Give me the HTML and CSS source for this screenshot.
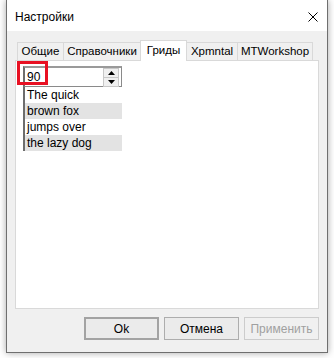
FILE: index.html
```html
<!DOCTYPE html>
<html lang="ru">
<head>
    <meta charset="UTF-8">
    <title>Настройки</title>
    <link rel="stylesheet" href="styles.css">
</head>
<body>
    <div class="window">
        <div class="titlebar">
            <span class="title">Настройки</span>
            <svg class="close" width="10" height="10" viewBox="0 0 10 10">
                <path d="M0.5 0.5 L9.5 9.5 M9.5 0.5 L0.5 9.5" stroke="#000" stroke-width="1" fill="none"/>
            </svg>
        </div>
        <div class="client">
            <div class="tabs">
                <div class="tab tab-general">Общие</div>
                <div class="tab tab-refs">Справочники</div>
                <div class="tab tab-grids active">Гриды</div>
                <div class="tab tab-xp">Xpmntal</div>
                <div class="tab tab-mt">MTWorkshop</div>
            </div>
            <div class="panel">
                <div class="grid">
                    <div class="spin">
                        <span class="spin-value">90</span>
                        <div class="spin-buttons">
                            <span class="spin-btn"><svg width="7" height="4" viewBox="0 0 7 4"><path d="M3.5 0 L7 4 L0 4 Z" fill="#000"/></svg></span>
                            <span class="spin-btn"><svg width="7" height="4" viewBox="0 0 7 4"><path d="M0 0 L7 0 L3.5 4 Z" fill="#000"/></svg></span>
                        </div>
                        <div class="highlight"></div>
                    </div>
                    <div class="row">The quick</div>
                    <div class="row alt">brown fox</div>
                    <div class="row">jumps over</div>
                    <div class="row alt">the lazy dog</div>
                </div>
            </div>
            <div class="buttons">
                <button class="btn default">Ok</button>
                <button class="btn">Отмена</button>
                <button class="btn" disabled>Применить</button>
            </div>
        </div>
    </div>
</body>
</html>
```

FILE: styles.css
```css
html, body {
    margin: 0;
    padding: 0;
}

body {
    width: 334px;
    height: 358px;
    background: #ffffff;
    font-family: 'Liberation Sans', Arial, sans-serif;
    font-size: 12px;
    color: #000;
    overflow: hidden;
}

.window {
    margin-left: 6px;
    width: 320px;
    height: 352px;
    border: 1px solid #6f6f6f;
    border-top: none;
    background: #f0f0f0;
    box-shadow: 0 0 7px rgba(0, 0, 0, 0.35);
    display: flex;
    flex-direction: column;
}

.titlebar {
    height: 31px;
    background: #ffffff;
    display: flex;
    align-items: center;
    padding-left: 8px;
    padding-right: 8px;
    flex-shrink: 0;
}

.title {
    flex: 1;
    font-size: 12px;
    padding-top: 2px;
}

.close {
    margin-right: 1px;
    margin-top: 3px;
}

.client {
    flex: 1;
    display: flex;
    flex-direction: column;
    padding: 9px 8px 12px 8px;
}

.tabs {
    display: flex;
    align-items: flex-end;
    height: 20px;
    padding-left: 3px;
    position: relative;
    z-index: 1;
}

.tab {
    box-sizing: border-box;
    height: 18px;
    border: 1px solid #d9d9d9;
    border-bottom: none;
    margin-left: -1px;
    background: #f0f0f0;
    text-align: center;
    line-height: 17px;
    font-size: 11.5px;
    white-space: nowrap;
}

.tab-general { width: 47px; }
.tab-refs { width: 78px; }
.tab-grids { width: 47px; }
.tab-xp { width: 52px; }
.tab-mt { width: 76px; }

.tab.active {
    height: 21px;
    margin-bottom: -1px;
    background: #ffffff;
    line-height: 19px;
    position: relative;
}

.panel {
    flex: 1;
    background: #ffffff;
    border: 1px solid #d9d9d9;
    padding: 5px 7px;
}

.grid {
    width: 99px;
}

.spin {
    position: relative;
    box-sizing: border-box;
    height: 21px;
    border: 1px solid #8a8a8a;
    border-top: 2px solid #9a9a9a;
    border-left: 2px solid #6d6d6d;
    display: flex;
    align-items: center;
    padding-left: 2px;
    padding-right: 2px;
}

.spin-value {
    flex: 1;
}

.spin-buttons {
    display: flex;
    flex-direction: column;
    width: 14px;
    height: 17px;
    border: 1px solid #c8c8c8;
    background: #f0f0f0;
}

.spin-btn {
    flex: 1;
    display: flex;
    align-items: center;
    justify-content: center;
}

.spin-btn + .spin-btn {
    border-top: 1px solid #c8c8c8;
}

.highlight {
    position: absolute;
    left: -8px;
    top: -7px;
    width: 25px;
    height: 18px;
    border: 3px solid #e81123;
}

.row {
    height: 16px;
    line-height: 16px;
    border-left: 2px solid #6d6d6d;
    padding-left: 2px;
    background: #ffffff;
}

.row.alt {
    background: #e3e3e3;
}

.buttons {
    display: flex;
    justify-content: flex-end;
    gap: 5px;
    margin-top: 8px;
}

.btn {
    width: 75px;
    height: 23px;
    background: #ebebeb;
    border: 1px solid #adadad;
    font-family: 'Liberation Sans', Arial, sans-serif;
    font-size: 12px;
    color: #000;
    padding: 0;
}

.btn.default {
    border: 2px solid #a3a3a3;
}

.btn:disabled {
    color: #a0a0a0;
    border-color: #cccccc;
    background: #f0f0f0;
}
```
